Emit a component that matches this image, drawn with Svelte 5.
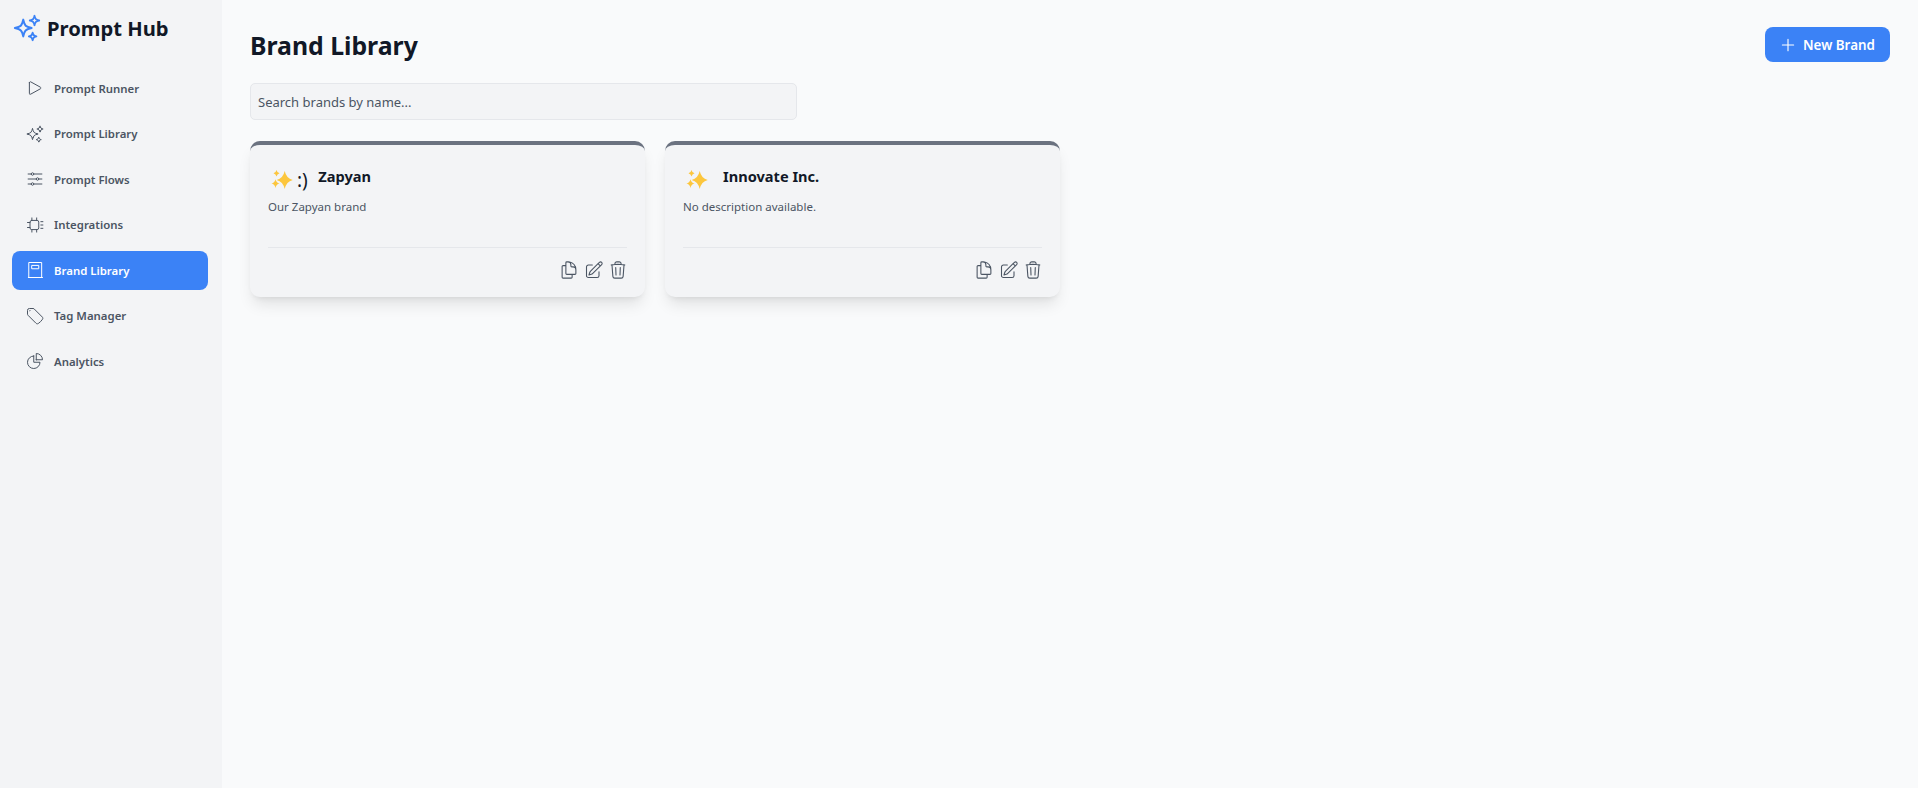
<script>
  const nav = [
    { label: 'Prompt Runner', paths: ['M5.25 5.653c0-.856.917-1.398 1.667-.986l11.54 6.347a1.125 1.125 0 0 1 0 1.972l-11.54 6.347a1.125 1.125 0 0 1-1.667-.986V5.653Z'] },
    { label: 'Prompt Library', paths: ['M9.813 15.904 9 18.75l-.813-2.846a4.5 4.5 0 0 0-3.09-3.09L2.25 12l2.846-.813a4.5 4.5 0 0 0 3.09-3.09L9 5.25l.813 2.846a4.5 4.5 0 0 0 3.09 3.09L15.75 12l-2.846.813a4.5 4.5 0 0 0-3.09 3.09ZM18.259 8.715 18 9.75l-.259-1.035a3.375 3.375 0 0 0-2.455-2.456L14.25 6l1.036-.259a3.375 3.375 0 0 0 2.455-2.456L18 2.25l.259 1.035a3.375 3.375 0 0 0 2.456 2.456L21.75 6l-1.035.259a3.375 3.375 0 0 0-2.456 2.456ZM16.894 20.567 16.5 21.75l-.394-1.183a2.25 2.25 0 0 0-1.423-1.423L13.5 18.75l1.183-.394a2.25 2.25 0 0 0 1.423-1.423l.394-1.183.394 1.183a2.25 2.25 0 0 0 1.423 1.423l1.183.394-1.183.394a2.25 2.25 0 0 0-1.423 1.423Z'] },
    { label: 'Prompt Flows', paths: ['M10.5 6h9.75M10.5 6a1.5 1.5 0 1 1-3 0m3 0a1.5 1.5 0 1 0-3 0M3.75 6H7.5m3 12h9.75m-9.75 0a1.5 1.5 0 0 1-3 0m3 0a1.5 1.5 0 0 0-3 0m-3.75 0H7.5m9-6h3.75m-3.75 0a1.5 1.5 0 0 1-3 0m3 0a1.5 1.5 0 0 0-3 0m-9.75 0h9.75'] },
    { label: 'Integrations', paths: ['M8 6.500h6.500a2 2 0 0 1 2 2v7a2 2 0 0 1-2 2H8a2 2 0 0 1-2-2v-7a2 2 0 0 1 2-2Z', 'M8.250 3.500v3M14 3.500v3M8.250 17.500v3M14 17.500v3M3 9h3M3 15h3M19 8h2.500M19 12h2.500M19 16h2.500'] },
    { label: 'Brand Library', active: true, paths: ['M5 3h15v18H5z', 'M8.500 6.500h8v4h-8z', 'M4 21h17'] },
    { label: 'Tag Manager', paths: ['M9.568 3H5.25A2.25 2.25 0 0 0 3 5.25v4.318c0 .597.237 1.17.659 1.591l9.581 9.581c.699.699 1.78.872 2.607.33a18.095 18.095 0 0 0 5.223-5.223c.542-.827.369-1.908-.33-2.607L11.16 3.66A2.25 2.25 0 0 0 9.568 3Z', 'M6 6h.008v.008H6V6Z'] },
    { label: 'Analytics', paths: ['M10.5 6a7.5 7.5 0 1 0 7.5 7.5h-7.5V6Z', 'M13.5 10.5H21A7.5 7.5 0 0 0 13.5 3v7.5Z'] }
  ];
  const sparkles = nav[1].paths[0];
  const actions = [
    ['M15.75 17.25v3.375c0 .621-.504 1.125-1.125 1.125h-9.75a1.125 1.125 0 0 1-1.125-1.125V7.875c0-.621.504-1.125 1.125-1.125H6.75a9.06 9.06 0 0 1 1.5.124m7.5 10.376h3.375c.621 0 1.125-.504 1.125-1.125V11.25c0-4.46-3.243-8.161-7.5-8.876a9.06 9.06 0 0 0-1.5-.124H9.375c-.621 0-1.125.504-1.125 1.125v3.5m7.5 10.375H9.375a1.125 1.125 0 0 1-1.125-1.125v-9.25m12 6.625v-1.875a3.375 3.375 0 0 0-3.375-3.375h-1.5a1.125 1.125 0 0 1-1.125-1.125v-1.5a3.375 3.375 0 0 0-3.375-3.375H9.75'],
    ['m16.862 4.487 1.687-1.688a1.875 1.875 0 1 1 2.652 2.652L10.582 16.07a4.5 4.5 0 0 1-1.897 1.13L6 18l.8-2.685a4.5 4.5 0 0 1 1.13-1.897l8.932-8.931Zm0 0L19.5 7.125M18 14v4.75A2.25 2.25 0 0 1 15.75 21H5.25A2.25 2.25 0 0 1 3 18.75V8.25A2.25 2.25 0 0 1 5.25 6H10'],
    ['m14.74 9-.346 9m-4.788 0L9.26 9m9.968-3.21c.342.052.682.107 1.022.166m-1.022-.165L18.16 19.673a2.25 2.25 0 0 1-2.244 2.077H8.084a2.25 2.25 0 0 1-2.244-2.077L4.772 5.79m14.456 0a48.108 48.108 0 0 0-3.478-.397m-12 .562c.34-.059.68-.114 1.022-.165m0 0a48.11 48.11 0 0 1 3.478-.397m7.5 0v-.916c0-1.18-.91-2.164-2.09-2.201a51.964 51.964 0 0 0-3.32 0c-1.18.037-2.09 1.022-2.09 2.201v.916m7.5 0a48.667 48.667 0 0 0-7.5 0']
  ];
  const brands = [
    { name: 'Zapyan', suffix: ':)', desc: 'Our Zapyan brand' },
    { name: 'Innovate Inc.', suffix: '', desc: 'No description available.' }
  ];
</script>

<div class="shell">
  <aside class="sidebar">
    <div class="logo">
      <svg class="logo-icon" viewBox="0 0 24 24" fill="none" stroke="currentColor" stroke-width="1.5" stroke-linecap="round" stroke-linejoin="round"><path d={sparkles} /></svg>
      <span>Prompt Hub</span>
    </div>
    <nav>
      {#each nav as item}
        <div class="nav-item" class:active={item.active}>
          <svg viewBox="0 0 24 24" fill="none" stroke="currentColor" stroke-width="1.2" stroke-linecap="round" stroke-linejoin="round">
            {#each item.paths as d}<path {d} />{/each}
          </svg>
          <span>{item.label}</span>
        </div>
      {/each}
    </nav>
  </aside>
  <main>
    <header>
      <h1>Brand Library</h1>
      <button class="new">
        <svg viewBox="0 0 24 24" fill="none" stroke="currentColor" stroke-width="1.5" stroke-linecap="round"><path d="M12 4.5v15m7.5-7.5h-15" /></svg>
        New Brand
      </button>
    </header>
    <div class="search">Search brands by name...</div>
    <section class="grid">
      {#each brands as b}
        <article class="card">
          <div class="head">
            <div class="emoji">
              <svg viewBox="0 0 30 28"><path fill="#fcc63d" d="M16.700 8Q18.300 15.300 24.700 17 18.300 18.700 16.700 26 15.100 18.700 8.700 17 15.100 15.300 16.700 8ZM8.500 7Q9.100 9.700 11.500 10.300 9.100 10.900 8.500 13.600 7.900 10.900 5.500 10.300 7.900 9.700 8.500 7ZM7.500 16.300Q8.200 19.700 11.500 20.600 8.200 21.500 7.500 24.900 6.800 21.500 3.500 20.600 6.800 19.700 7.500 16.300Z" /></svg>
              {#if b.suffix}<span>{b.suffix}</span>{/if}
            </div>
            <h2>{b.name}</h2>
          </div>
          <p>{b.desc}</p>
          <div class="foot">
            {#each actions as paths}
              <svg viewBox="0 0 24 24" fill="none" stroke="currentColor" stroke-width="1.3" stroke-linecap="round" stroke-linejoin="round">
                {#each paths as d}<path {d} />{/each}
              </svg>
            {/each}
          </div>
        </article>
      {/each}
    </section>
  </main>
</div>

<style>
  :global(body) { margin: 0; }
  .shell {
    display: flex;
    height: 788px;
    overflow: hidden;
    background: #f9fafb;
    font-family: "Noto Sans", "Open Sans", sans-serif;
    color: #111827;
  }
  .sidebar {
    width: 222px;
    flex: none;
    box-sizing: border-box;
    background: #f3f4f6;
    padding: 13px 14px 12px 12px;
  }
  .logo {
    display: flex;
    align-items: center;
    gap: 5px;
    height: 30px;
    margin-bottom: 25.600px;
    font-size: 20.200px;
    font-weight: 700;
  }
  .logo-icon { width: 30px; height: 30px; color: #3b82f6; flex: none; }
  nav { display: flex; flex-direction: column; gap: 6.500px; }
  .nav-item {
    display: flex;
    align-items: center;
    gap: 9px;
    height: 39px;
    padding: 0 12px 0 13px;
    border-radius: 8px;
    font-size: 11.400px;
    font-weight: 600;
    color: #4b5563;
  }
  .nav-item svg { width: 20px; height: 20px; flex: none; }
  .nav-item.active { background: #3b82f6; color: #fff; }
  main { flex: 1; min-width: 0; padding: 27px 28px; }
  header { display: flex; justify-content: space-between; align-items: center; height: 35px; margin-bottom: 21px; }
  h1 { margin: 1px 0 0; font-size: 24.800px; font-weight: 700; line-height: 1; }
  .new {
    display: flex;
    align-items: center;
    gap: 6px;
    width: 125px;
    height: 35px;
    padding: 0 0 0 14px;
    border: 0;
    border-radius: 8px;
    background: #3b82f6;
    color: #fff;
    font: 600 13.400px "Noto Sans", sans-serif;
  }
  .new svg { width: 18px; height: 18px; flex: none; }
  .search {
    box-sizing: border-box;
    width: 547px;
    height: 37px;
    display: flex;
    align-items: center;
    padding: 0 7px;
    background: #f3f4f6;
    border: 1px solid #e5e7eb;
    border-radius: 5px;
    font-size: 13px;
    color: #4b5563;
    margin-bottom: 21px;
  }
  .grid { display: grid; grid-template-columns: repeat(4, 1fr); gap: 20px; }
  .card {
    box-sizing: border-box;
    height: 156px;
    padding: 18px 18px 17px;
    background: #f3f4f6;
    border-top: 4px solid #6b7280;
    border-radius: 10px;
    box-shadow: 0 10px 15px -3px rgba(0,0,0,.1), 0 4px 6px -4px rgba(0,0,0,.1);
    display: flex;
    flex-direction: column;
  }
  .head { display: flex; align-items: flex-start; height: 28px; gap: 10px; }
  .emoji { display: flex; align-items: center; height: 34px; color: #111827; }
  .emoji svg { width: 30px; height: 28px; flex: none; align-self: flex-start; }
  .emoji span { font-size: 19px; line-height: 34px; margin: 0 0.500px 0 -1px; font-weight: 400; }
  h2 { margin: 2px 0 0; font-size: 14.600px; font-weight: 700; line-height: 22px; }
  p { margin: 7px 0 0; font-size: 11.500px; line-height: 18px; color: #4b5563; flex: 1; }
  .foot {
    border-top: 1px solid #e5e7eb;
    display: flex;
    justify-content: flex-end;
    gap: 4.500px;
    padding-top: 12px;
    color: #4b5563;
  }
  .foot svg { width: 20px; height: 20px; flex: none; }
  .foot svg:last-child { margin-right: -1px; }
</style>
